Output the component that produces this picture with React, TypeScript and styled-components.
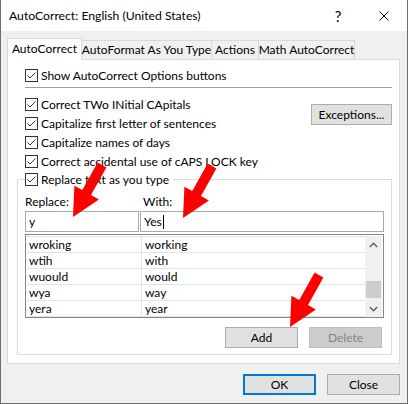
import React from "react";
import styled, { createGlobalStyle, css } from "styled-components";

const Global = createGlobalStyle`
  html, body { margin: 0; padding: 0; background: #ffffff; }
  body {
    font-family: "Lato", "Noto Sans", sans-serif;
    font-size: 12px;
    color: #000;
  }
  * { box-sizing: border-box; }
`;

const Frame = styled.div`
  position: relative;
  width: 408px;
  height: 404px;
  background: #f0f0f0;
  border-left: 1px solid #6e6e6e;
  border-right: 1px solid #6e6e6e;
  border-bottom: 1px solid #6e6e6e;
  display: flex;
  flex-direction: column;
  overflow: hidden;
`;

const TitleBar = styled.div`
  height: 31px;
  flex: none;
  background: #ffffff;
  display: flex;
  align-items: center;
`;

const TitleText = styled.div`
  flex: 1;
  padding-left: 8px;
  font-size: 12.2px;
  white-space: nowrap;
`;

const TitleButton = styled.div`
  width: 46px;
  height: 31px;
  display: flex;
  align-items: center;
  justify-content: center;
  font-size: 15px;
`;

const Body = styled.div`
  flex: 1;
  display: flex;
  flex-direction: column;
  padding: 7px 7px 0 6px;
`;

const TabStrip = styled.div`
  display: flex;
  align-items: flex-end;
  height: 22px;
  position: relative;
  z-index: 1;
`;

const Tab = styled.div<{ $active?: boolean; $w: number }>`
  width: ${(p) => p.$w}px;
  display: flex;
  justify-content: center;
  white-space: nowrap;
  border: 1px solid #d9d9d9;
  ${(p) =>
    p.$active
      ? css`
          height: 22px;
          background: #ffffff;
          border-bottom: none;
          padding-top: 2px;
        `
      : css`
          height: 19px;
          margin-bottom: 1px;
          background: #f0f0f0;
          border-left: none;
          border-bottom: none;
          padding-top: 1px;
        `}
`;

const Panel = styled.div`
  height: 305px;
  margin-top: -1px;
  background: #ffffff;
  border: 1px solid #d9d9d9;
  padding: 6px 7px 0 9px;
  display: flex;
  flex-direction: column;
`;

const CheckRow = styled.div<{ $inset?: number }>`
  height: 19px;
  line-height: 19px;
  display: flex;
  align-items: center;
  gap: 3px;
  margin-left: ${(p) => p.$inset ?? 8}px;
  white-space: nowrap;
`;

const Box = styled.span`
  width: 13px;
  height: 13px;
  flex: none;
  border: 1px solid #333333;
  background: #ffffff;
  display: inline-flex;
  align-items: center;
  justify-content: center;
`;

const Check = ({ label, inset }: { label: string; inset?: number }) => (
  <CheckRow $inset={inset}>
    <Box>
      <svg width="11" height="11" viewBox="0 0 11 11">
        <polyline points="1.5,5.5 4,8 9.5,2.5" fill="none" stroke="#333" strokeWidth="1" />
      </svg>
    </Box>
    <span>{label}</span>
  </CheckRow>
);

const Separator = styled.div`
  height: 1px;
  background: #a0a0a0;
  margin: 2px 0 7px 8px;
`;

const OptionsRow = styled.div`
  display: flex;
  justify-content: space-between;
  align-items: flex-start;
`;

const OptionsColumn = styled.div`
  display: flex;
  flex-direction: column;
`;

const PushButton = styled.div<{ $w: number; $default?: boolean; $disabled?: boolean; $mt?: number }>`
  width: ${(p) => p.$w}px;
  height: 21px;
  margin-top: ${(p) => p.$mt ?? 0}px;
  display: flex;
  align-items: center;
  justify-content: center;
  background: ${(p) => (p.$disabled ? "#cccccc" : "#e1e1e1")};
  border: ${(p) => (p.$default ? "2px solid #0078d7" : p.$disabled ? "1px solid #bfbfbf" : "1px solid #adadad")};
  color: ${(p) => (p.$disabled ? "#838383" : "#000")};
  white-space: nowrap;
`;

const GroupBox = styled.fieldset`
  margin: -1px 0 0 0;
  border: 1px solid #dcdcdc;
  padding: 0 7px 6px 7px;
  min-width: 0;
`;

const GroupLegend = styled.legend`
  padding: 0 4px 0 0;
  margin-left: 0;
`;

const FieldGrid = styled.div`
  display: grid;
  grid-template-columns: 114px 1fr;
  column-gap: 1px;
  row-gap: 1px;
  margin-top: 5px;
`;

const FieldLabel = styled.div<{ $pad?: number }>`
  height: 16px;
  line-height: 16px;
  padding-left: ${(p) => p.$pad ?? 0}px;
`;

const TextBox = styled.div`
  height: 21px;
  border: 1px solid #a9a9a9;
  background: #fff;
  padding-left: 3px;
  display: flex;
  align-items: center;
`;

const Caret = styled.span`
  display: inline-block;
  width: 1px;
  height: 14px;
  background: #000;
  margin-left: 1px;
`;

const ListBox = styled.div`
  margin-top: 2px;
  height: 84px;
  border: 1px solid #828790;
  background: #fff;
  padding: 1px 1px 0 1px;
  display: flex;
`;

const ListRows = styled.div`
  flex: 1;
  border-top: 1px solid #e3e3e3;
  align-self: flex-start;
`;

const ListRow = styled.div`
  height: 16px;
  display: flex;
  border-bottom: 1px solid #e3e3e3;
`;

const ListCell = styled.div<{ $w?: number }>`
  ${(p) => (p.$w ? `width: ${p.$w}px; border-right: 1px solid #e3e3e3;` : "flex: 1;")}
  padding-left: ${(p) => (p.$w ? 2 : 3)}px;
  line-height: 15px;
  white-space: nowrap;
  overflow: hidden;
`;

const ScrollBar = styled.div`
  width: 17px;
  height: 81px;
  background: #f0f0f0;
  display: flex;
  flex-direction: column;
  align-items: center;
`;

const ScrollArrow = styled.div`
  height: 17px;
  width: 17px;
  display: flex;
  align-items: center;
  justify-content: center;
`;

const ScrollTrack = styled.div`
  flex: 1;
  width: 100%;
  display: flex;
  flex-direction: column;
  justify-content: flex-end;
  padding: 0 1px 2px 1px;
`;

const ScrollThumb = styled.div`
  height: 17px;
  background: #cdcdcd;
`;

const ButtonRow = styled.div`
  display: flex;
  justify-content: flex-end;
  gap: 11px;
  margin: 9px 2px 0 0;
`;

const Footer = styled.div`
  display: flex;
  justify-content: flex-end;
  gap: 11px;
  margin-top: 10px;
`;

const ArrowLayer = styled.svg`
  position: absolute;
  top: 0;
  left: -1px;
  width: 408px;
  height: 404px;
  pointer-events: none;
  z-index: 5;
`;

function arrowPoints(tx: number, ty: number, px: number, py: number) {
  const shaft = 10, headLen = 28, headHalf = 14;
  const dx = px - tx, dy = py - ty;
  const len = Math.hypot(dx, dy);
  const ux = dx / len, uy = dy / len;
  const nx = -uy, ny = ux;
  const bx = px - ux * headLen, by = py - uy * headLen;
  const s = shaft / 2;
  const pts = [
    [tx + nx * s, ty + ny * s],
    [bx + nx * s, by + ny * s],
    [bx + nx * headHalf, by + ny * headHalf],
    [px, py],
    [bx - nx * headHalf, by - ny * headHalf],
    [bx - nx * s, by - ny * s],
    [tx - nx * s, ty - ny * s],
  ];
  return pts.map((p) => `${p[0].toFixed(1)},${p[1].toFixed(1)}`).join(" ");
}

const rows = [
  ["wroking", "working"],
  ["wtih", "with"],
  ["wuould", "would"],
  ["wya", "way"],
  ["yera", "year"],
];

export default function App() {
  return (
    <>
      <Global />
      <Frame>
        <TitleBar>
          <TitleText>AutoCorrect: English (United States)</TitleText>
          <TitleButton>?</TitleButton>
          <TitleButton>
            <svg width="10" height="10" viewBox="0 0 10 10">
              <path d="M0.5 0.5 L9.5 9.5 M9.5 0.5 L0.5 9.5" stroke="#000" strokeWidth="1" />
            </svg>
          </TitleButton>
        </TitleBar>
        <Body>
          <TabStrip>
            <Tab $active $w={75}>AutoCorrect</Tab>
            <Tab $w={130}>AutoFormat As You Type</Tab>
            <Tab $w={47}>Actions</Tab>
            <Tab $w={96}>Math AutoCorrect</Tab>
          </TabStrip>
          <Panel>
            <Check label="Show AutoCorrect Options buttons" />
            <Separator />
            <OptionsRow>
              <OptionsColumn>
                <Check label="Correct TWo INitial CApitals" />
                <Check label="Capitalize first letter of sentences" />
                <Check label="Capitalize names of days" />
                <Check label="Correct accidental use of cAPS LOCK key" />
              </OptionsColumn>
              <PushButton $w={81} $mt={9}>Exceptions...</PushButton>
            </OptionsRow>
            <GroupBox>
              <GroupLegend>
                <Check label="Replace text as you type" inset={0} />
              </GroupLegend>
              <FieldGrid>
                <FieldLabel>Replace:</FieldLabel>
                <FieldLabel $pad={3}>With:</FieldLabel>
                <TextBox>y</TextBox>
                <TextBox>
                  Yes
                  <Caret />
                </TextBox>
              </FieldGrid>
              <ListBox>
                <ListRows>
                  {rows.map(([a, b]) => (
                    <ListRow key={a}>
                      <ListCell $w={115}>{a}</ListCell>
                      <ListCell>{b}</ListCell>
                    </ListRow>
                  ))}
                </ListRows>
                <ScrollBar>
                  <ScrollArrow>
                    <svg width="9" height="6" viewBox="0 0 9 6">
                      <polyline points="0.8,5 4.5,1.3 8.2,5" fill="none" stroke="#606060" strokeWidth="1.4" />
                    </svg>
                  </ScrollArrow>
                  <ScrollTrack>
                    <ScrollThumb />
                  </ScrollTrack>
                  <ScrollArrow>
                    <svg width="9" height="6" viewBox="0 0 9 6">
                      <polyline points="0.8,1 4.5,4.7 8.2,1" fill="none" stroke="#606060" strokeWidth="1.4" />
                    </svg>
                  </ScrollArrow>
                </ScrollBar>
              </ListBox>
              <ButtonRow>
                <PushButton $w={73}>Add</PushButton>
                <PushButton $w={73} $disabled>Delete</PushButton>
              </ButtonRow>
            </GroupBox>
          </Panel>
          <Footer>
            <PushButton $w={73} $default>OK</PushButton>
            <PushButton $w={73}>Close</PushButton>
          </Footer>
        </Body>
        <ArrowLayer viewBox="0 0 408 404">
          <polygon points={arrowPoints(102, 165, 73, 217)} fill="#ff0000" />
          <polygon points={arrowPoints(212, 166, 183, 218)} fill="#ff0000" />
          <polygon points={arrowPoints(319, 275, 290, 327)} fill="#ff0000" />
        </ArrowLayer>
      </Frame>
    </>
  );
}
